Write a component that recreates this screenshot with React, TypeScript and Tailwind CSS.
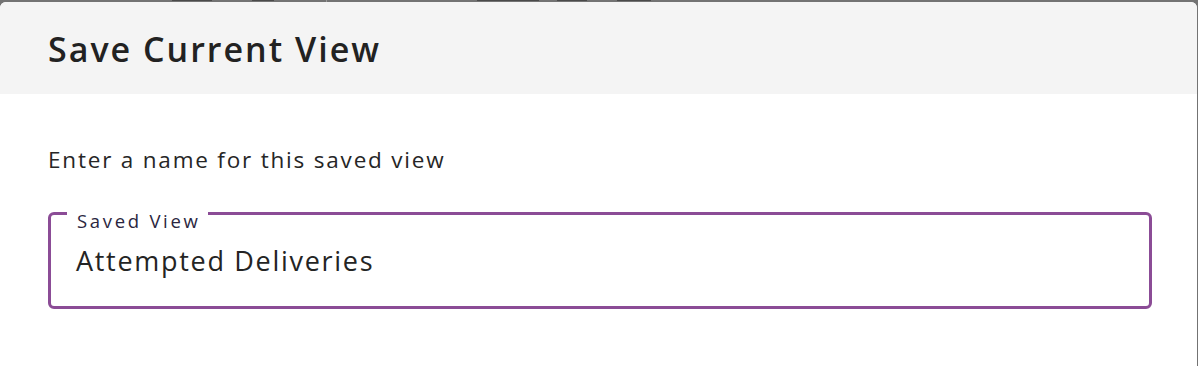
export default function App() {
  return (
    <div className="relative h-[366px] w-[1198px] overflow-hidden bg-[#737373] font-['Open_Sans','Liberation_Sans',sans-serif]">
      {/* sliver of the page behind the dialog */}
      <div className="flex h-[2px] items-start">
        <span className="ml-[172px] h-[1px] w-[40px] bg-[#4a4a4a]" />
        <span className="ml-[40px] h-[1px] w-[22px] bg-[#4a4a4a]" />
        <span className="ml-[52px] h-[2px] w-[1px] bg-[#9a9a9a]" />
        <span className="ml-[150px] h-[1px] w-[62px] bg-[#4a4a4a]" />
        <span className="ml-[18px] h-[1px] w-[30px] bg-[#4a4a4a]" />
        <span className="ml-[30px] h-[1px] w-[34px] bg-[#4a4a4a]" />
      </div>
      <div className="mr-[1px] flex h-[364px] flex-col overflow-hidden rounded-t-[6px] bg-white">
        <div className="h-[92px] bg-[#f4f4f4] px-12 pt-[30px]">
          <h2 className="text-[34px] font-semibold leading-none tracking-[2px] text-[#222222]">Save Current View</h2>
        </div>
        <div className="px-12 pt-[55px]">
          <p className="text-[22.5px] leading-[22px] tracking-[1.8px] text-[#262626]">Enter a name for this saved view</p>
          <fieldset className="mt-[25px] w-[1104px] rounded-[6px] border-[3px] border-[#8b4c96] px-[16px] pb-[32px]">
            <legend className="pl-[10px] pr-[7px] pt-[16px] text-[18.5px] leading-[18px] tracking-[2.7px] text-[#2b2640]">
              Saved View
            </legend>
            <div className="pl-[9px] pt-[18px] text-[27px] leading-[26px] tracking-[1.7px] text-[#242424]">
              Attempted Deliveries
            </div>
          </fieldset>
        </div>
      </div>
    </div>
  );
}
